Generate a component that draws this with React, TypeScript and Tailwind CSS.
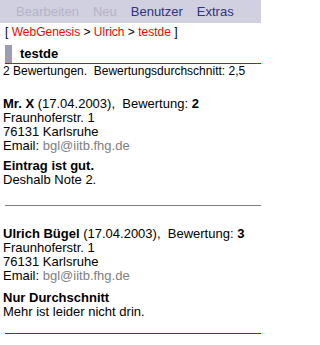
export default function App() {
  return (
    <div className="w-[261px] h-[345px] bg-white overflow-hidden text-black font-['Liberation_Sans',Arial,sans-serif]">
      <div className="h-[23px] bg-[#d0d0e0] flex items-center pl-[9px] text-[13px] leading-[15px]">
        <span className="px-[7px] text-[#b4b4c8]">Bearbeiten</span>
        <span className="px-[7px] text-[#b4b4c8]">Neu</span>
        <span className="px-[7px] text-[#333380]">Benutzer</span>
        <span className="px-[7px] text-[#333380]">Extras</span>
      </div>
      <div className="pl-[5px] pt-[2px] text-[12px] leading-[14px] whitespace-pre">
        {"[ "}
        <span className="text-[#ff0000]">WebGenesis</span>
        {" > "}
        <span className="text-[#ff0000]">Ulrich</span>
        {" > "}
        <span className="text-[#ff0000]">testde</span>
        {" ]"}
      </div>
      <div className="ml-[5px] mt-[6px] flex border-b border-[#e00000]">
        <div className="w-[7px] bg-[#9c9cb4]" />
        <div className="pl-2 text-[13px] font-bold leading-[18px]">testde</div>
      </div>
      <div className="pl-[3px] text-[12px] leading-[14px] whitespace-pre">
        {"2 Bewertungen.  Bewertungsdurchschnitt: 2,5"}
      </div>

      <div className="pl-[3px] mt-[19px] text-[13px] leading-[14px]">
        <div className="whitespace-pre">
          <b>Mr. X</b>
          {" (17.04.2003),  Bewertung: "}
          <b>2</b>
        </div>
        <div>Fraunhoferstr. 1</div>
        <div>76131 Karlsruhe</div>
        <div>
          Email: <span className="text-[#808080]">bgl@iitb.fhg.de</span>
        </div>
        <div className="mt-[6px] font-bold">Eintrag ist gut.</div>
        <div>Deshalb Note 2.</div>
      </div>
      <div className="ml-[5px] mt-[18px] h-px bg-[#808080]" />

      <div className="pl-[3px] mt-[21px] text-[13px] leading-[14px]">
        <div className="whitespace-pre">
          <b>Ulrich Bügel</b>
          {" (17.04.2003),  Bewertung: "}
          <b>3</b>
        </div>
        <div>Fraunhoferstr. 1</div>
        <div>76131 Karlsruhe</div>
        <div>
          Email: <span className="text-[#808080]">bgl@iitb.fhg.de</span>
        </div>
        <div className="mt-[8px] font-bold">Nur Durchschnitt</div>
        <div>Mehr ist leider nicht drin.</div>
      </div>
      <div className="ml-[5px] mt-[14px] h-px bg-[#d00000]" />
    </div>
  );
}
